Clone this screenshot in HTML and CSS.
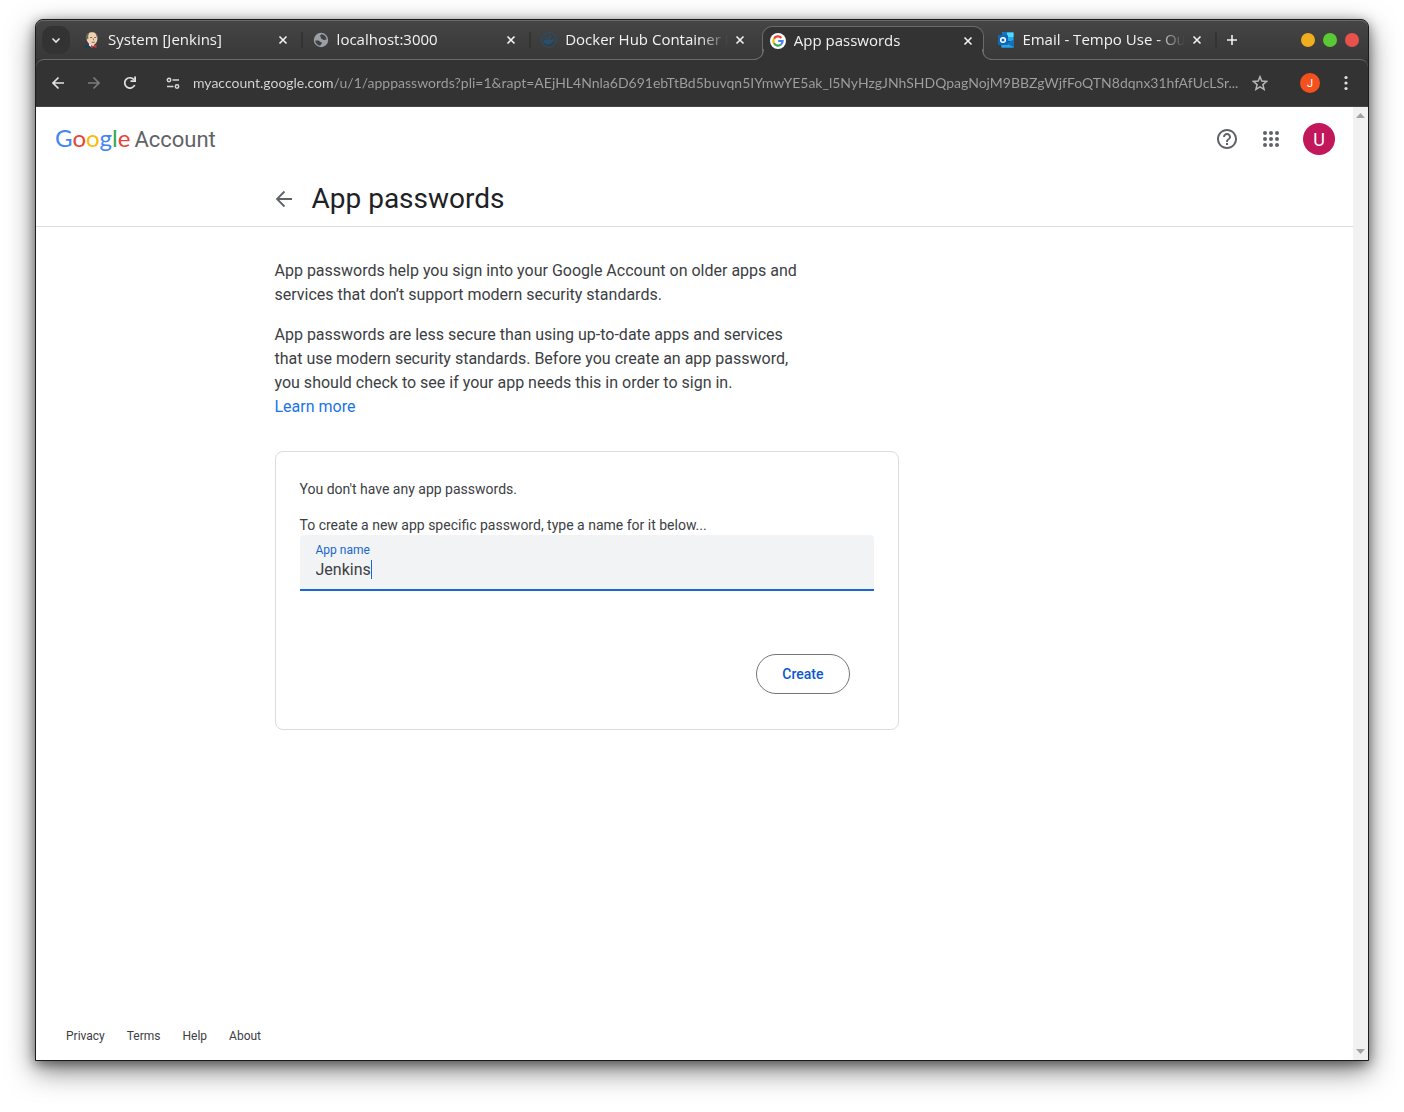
FILE: index.html
```html
<!DOCTYPE html>
<html lang="en">
<head>
<meta charset="utf-8">
<title>App passwords</title>
<link rel="stylesheet" href="styles.css">
</head>
<body>
<div class="window">
  <div class="tab-strip">
    <button class="tab-search" type="button" aria-label="Search tabs"><svg width="16" height="16" viewBox="0 0 16 16"><path d="M4.500 6.500 8 10l3.500-3.500" fill="none" stroke="#e6e6e6" stroke-width="1.600"/></svg></button>
    <div class="tabs">
      <div class="tab tab-divided">
        <svg class="favicon" viewBox="0 0 16 16"><path d="M0 16c.3-2 1.500-2.600 3.500-3.400h7c2 .4 3 1.800 3.200 3.400z" fill="#1f3d56"/><path d="M5 11.500h5v2L8 15.500l-3-2z" fill="#eef0f0"/><path d="M2.500 5.500C2.500 2 5 .2 8 .2s5.500 2 5.500 5.600c0 4-1.900 7.200-5 7.200S3.600 10.500 2.700 8z" fill="#efd0b0"/><path d="M2.700 8.500C1 5 2 1.500 5.500.5c-.8 1.200-.7 2-1.300 3.200l.2 3.300-1-.2z" fill="#6b655e"/><path d="M11.500 1.200c1.900 1.200 2.300 3.300 1.900 5.800l-.9-2.800z" fill="#6b655e"/><path d="M6 5.500h2.200M10.200 5.500h1.800M7.800 10.300h3M9.400 6.500v1.700" fill="none" stroke="#594236" stroke-width=".7"/><path d="m7 13 2.300 1 3.200-1.400v3.400l-3.200-1-2.300 1z" fill="#d33833"/></svg>
        <span class="tab-title">System [Jenkins]</span>
        <button class="tab-close" type="button" aria-label="Close System"><svg width="16" height="16" viewBox="0 0 16 16"><path d="m4.500 4.500 7 7m0-7-7 7"/></svg></button>
      </div>
      <div class="tab tab-divided">
        <svg class="favicon" viewBox="0 0 16 16"><circle cx="8" cy="8" r="7.200" fill="#9aa0a6"/><path d="M2.200 8.500h3c1.500 0 1.300 1.500 2.600 1.500 1.200 0 1.200 1 .8 1.800-.5.800-1.300 1-1.400 2C4.500 13.500 2.400 11.200 2.200 8.500zM8.500 2.200C7 3 6.800 4 7.600 4.700c.7.600-.4 1.600.8 2 1 .3 1.400 1.200 2.500 1.300 1 .1 1.500-.6 2.800-.3-.2-2.900-2.300-5.200-5.200-5.500z" fill="#3f4144"/></svg>
        <span class="tab-title">localhost:3000</span>
        <button class="tab-close" type="button" aria-label="Close localhost"><svg width="16" height="16" viewBox="0 0 16 16"><path d="m4.500 4.500 7 7m0-7-7 7"/></svg></button>
      </div>
      <div class="tab">
        <svg class="favicon" viewBox="0 0 16 16"><circle cx="8" cy="8" r="7.400" fill="none" stroke="#26506d" stroke-width="1"/><path d="M2.800 8h7.800c.6 0 .8-1.500 1.500-2 .5.500.7 1.200.6 1.600l1 .3c-.4.900-1.200 1-1.700 1-1.200 2.500-3.200 3.600-5.600 3.400-2.500-.2-3.800-1.700-3.600-4.300zM3.800 5.800h1.600v1.600H3.800zM5.900 5.800h1.600v1.600H5.900zM8 5.800h1.600v1.600H8zM8 3.700h1.600v1.600H8z" fill="#255171"/></svg>
        <span class="tab-title">Docker Hub Container I</span>
        <button class="tab-close" type="button" aria-label="Close Docker Hub"><svg width="16" height="16" viewBox="0 0 16 16"><path d="m4.500 4.500 7 7m0-7-7 7"/></svg></button>
      </div>
      <div class="tab tab-active">
        <svg class="favicon" viewBox="0 0 16 16"><circle cx="8" cy="8" r="8" fill="#fff"/><g fill="none" stroke-width="2.200"><path d="M4 5.700A4.600 4.600 0 0 1 11.400 4.900" stroke="#ea4335"/><path d="M4 5.600a4.700 4.700 0 0 0 0 4.800" stroke="#fbbc05"/><path d="M4 10.300a4.600 4.600 0 0 0 7 1.200" stroke="#34a853"/><path d="M8.200 8h4.400c0 1.500-.6 2.700-1.600 3.500" stroke="#4285f4"/></g></svg>
        <span class="tab-title">App passwords</span>
        <button class="tab-close" type="button" aria-label="Close App passwords"><svg width="16" height="16" viewBox="0 0 16 16"><path d="m4.500 4.500 7 7m0-7-7 7"/></svg></button>
      </div>
      <div class="tab tab-divided">
        <svg class="favicon" viewBox="0 0 16 16"><path d="M4 .5h11.500V9H4z" fill="#28a8ea"/><path d="M9 .5h6.500v4.500H9z" fill="#50d9ff"/><path d="M4 .5h5V5H4z" fill="#0f78d4"/><path d="M3 15.500V9l6 2 7-3.500v8z" fill="#1490df"/><path d="m4 9 12 6.500H4z" fill="#28a8ea"/><path d="m16 7.500-7 4 7 4z" fill="#1271bd"/><rect y="3" width="10" height="10" rx=".8" fill="#0f67b7"/><circle cx="5" cy="8" r="2.300" fill="none" stroke="#fff" stroke-width="1.500"/></svg>
        <span class="tab-title">Email - Tempo Use - Ou</span>
        <button class="tab-close" type="button" aria-label="Close Email"><svg width="16" height="16" viewBox="0 0 16 16"><path d="m4.500 4.500 7 7m0-7-7 7"/></svg></button>
      </div>
    </div>
    <button class="new-tab" type="button" aria-label="New tab"><svg width="16" height="16" viewBox="0 0 16 16"><path d="M8 3v10M3 8h10" stroke="#f2f2f2" stroke-width="1.600"/></svg></button>
    <div class="window-controls">
      <button class="control control-minimize" type="button" aria-label="Minimize"></button>
      <button class="control control-maximize" type="button" aria-label="Maximize"></button>
      <button class="control control-close" type="button" aria-label="Close window"></button>
    </div>
  </div>

  <div class="toolbar">
    <button class="tool" type="button" aria-label="Back"><svg width="16" height="16" viewBox="0 0 16 16"><path d="M14 8H3m5.500-5.500L3 8l5.500 5.500" fill="none" stroke="#e3e3e3" stroke-width="1.700"/></svg></button>
    <button class="tool" type="button" aria-label="Forward"><svg width="16" height="16" viewBox="0 0 16 16"><path d="M2 8h11M7.500 2.500 13 8l-5.500 5.500" fill="none" stroke="#7c7c7c" stroke-width="1.700"/></svg></button>
    <button class="tool" type="button" aria-label="Reload"><svg width="16" height="16" viewBox="0 0 16 16"><path d="M12.700 10A5.200 5.200 0 1 1 12 4.700" fill="none" stroke="#e3e3e3" stroke-width="1.700"/><path d="M14 1.500V7H8.500V5.300h3.700V1.500z" fill="#e3e3e3"/></svg></button>
    <div class="address">
      <button class="tool" type="button" aria-label="Site information"><svg width="16" height="16" viewBox="0 0 16 16"><g fill="none" stroke="#d8d8d8" stroke-width="1.500"><circle cx="4" cy="5" r="1.700"/><path d="M7.500 5H14M2 11.500h6.500"/><circle cx="12" cy="11.500" r="1.700"/></g></svg></button>
      <input class="url" type="text" aria-label="Address" value="myaccount.google.com/u/1/apppasswords?pli=1&amp;rapt=AEjHL4Nnla6D691ebTtBd5buvqn5IYmwYE5ak_l5NyHzgJNhSHDQpagNojM9BBZgWjfFoQTN8dqnx31hfAfUcLSr...">
      <button class="tool" type="button" aria-label="Bookmark"><svg width="16" height="16" viewBox="0 0 16 16"><path d="m8 1.700 1.800 4.400 4.800.4-3.700 3.100 1.200 4.700L8 11.800l-4.100 2.500 1.200-4.700-3.700-3.100 4.800-.4z" fill="none" stroke="#b8b8b8" stroke-width="1.500"/></svg></button>
    </div>
    <button class="profile" type="button">J</button>
    <button class="tool" type="button" aria-label="Menu"><svg width="16" height="16" viewBox="0 0 16 16" fill="#e3e3e3"><circle cx="8" cy="2.500" r="1.600"/><circle cx="8" cy="8" r="1.600"/><circle cx="8" cy="13.500" r="1.600"/></svg></button>
  </div>

  <div class="viewport">
    <div class="page">
      <header class="site-header">
        <a class="brand" href="#"><span class="logo"><span class="blue">G</span><span class="red">o</span><span class="yellow">o</span><span class="blue">g</span><span class="green">l</span><span class="red">e</span></span><span class="brand-name">Account</span></a>
        <nav class="site-tools">
          <button class="plain" type="button" aria-label="Help"><svg width="24" height="24" viewBox="0 0 24 24" fill="#5f6368"><path d="M11 18h2v-2h-2v2zm1-16C6.480 2 2 6.480 2 12s4.480 10 10 10 10-4.480 10-10S17.520 2 12 2zm0 18c-4.410 0-8-3.590-8-8s3.590-8 8-8 8 3.590 8 8-3.590 8-8 8zm0-14c-2.210 0-4 1.790-4 4h2c0-1.100.9-2 2-2s2 .9 2 2c0 2-3 1.750-3 5h2c0-2.250 3-2.500 3-5 0-2.210-1.790-4-4-4z"/></svg></button>
          <button class="plain" type="button" aria-label="Google apps"><svg width="24" height="24" viewBox="0 0 24 24" fill="#5f6368"><circle cx="6" cy="6" r="2"/><circle cx="12" cy="6" r="2"/><circle cx="18" cy="6" r="2"/><circle cx="6" cy="12" r="2"/><circle cx="12" cy="12" r="2"/><circle cx="18" cy="12" r="2"/><circle cx="6" cy="18" r="2"/><circle cx="12" cy="18" r="2"/><circle cx="18" cy="18" r="2"/></svg></button>
          <button class="avatar" type="button">U</button>
        </nav>
      </header>
      <div class="title-bar">
        <div class="column title-row">
          <a class="back" href="#" aria-label="Back"><svg width="20" height="20" viewBox="0 0 20 20"><path d="M17 10H2m7.500-7.500L2 10l7.500 7.500" fill="none" stroke="#5f6368" stroke-width="1.800"/></svg></a>
          <h1>App passwords</h1>
        </div>
      </div>
      <main class="column content">
        <div class="intro">
          <p>App passwords help you sign into your Google Account on older apps and services that don’t support modern security standards.</p>
          <p>App passwords are less secure than using up-to-date apps and services that use modern security standards. Before you create an app password, you should check to see if your app needs this in order to sign in. <a href="#">Learn&nbsp;more</a></p>
        </div>
        <form class="card">
          <p>You don't have any app passwords.</p>
          <p>To create a new app specific password, type a name for it below...</p>
          <div class="field">
            <label for="app-name">App name</label>
            <input id="app-name" type="text" value="Jenkins">
            <span class="caret"></span>
          </div>
          <div class="actions"><button class="create" type="button">Create</button></div>
        </form>
      </main>
      <footer class="site-footer"><a href="#">Privacy</a><a href="#">Terms</a><a href="#">Help</a><a href="#">About</a></footer>
    </div>
    <div class="scrollbar"><svg width="9" height="5" viewBox="0 0 9 5"><path d="m0 5 4.500-5L9 5z" fill="#a3a3a3"/></svg><svg width="9" height="5" viewBox="0 0 9 5"><path d="m0 0 4.500 5L9 0z" fill="#a3a3a3"/></svg></div>
  </div>
</div>
</body>
</html>
```
FILE: styles.css
```css
* { box-sizing: border-box; }

body {
  margin: 0;
  min-height: 100vh;
  display: flex;
  padding: 19px 35px 51px;
  background: #fff;
  font-family: Roboto, "Liberation Sans", sans-serif;
  color: #3c4043;
}

button {
  border: 0;
  padding: 0;
  background: none;
  font: inherit;
  display: flex;
  align-items: center;
  justify-content: center;
  flex: none;
}

a { color: inherit; text-decoration: none; }
p { margin: 0; }
svg { display: block; flex: none; }

.window {
  flex: 1;
  min-width: 0;
  display: flex;
  flex-direction: column;
  border: 1px solid #1b1b1b;
  border-radius: 8px 8px 0 0;
  background: #333;
  box-shadow: 0 10px 28px rgba(0, 0, 0, .5), 0 3px 12px rgba(0, 0, 0, .45);
}

/* Tab strip */
.tab-strip {
  display: flex;
  align-items: center;
  height: 39px;
  padding: 0 9px 0 6px;
  box-shadow: inset 0 1px #6b6b6b;
  border-radius: 7px 7px 0 0;
  background: linear-gradient(#454545, #383838);
}

.tab-search {
  width: 28px;
  height: 28px;
  border-radius: 10px;
  background: #333;
}

.tabs {
  flex: 1;
  min-width: 0;
  display: flex;
  align-self: stretch;
  margin-left: 4px;
}

.tab {
  position: relative;
  flex: 1 1 0;
  min-width: 0;
  display: flex;
  align-items: center;
  gap: 8px;
  padding: 0 12px 0 10px;
  color: #f2f2f2;
  font: 15px/18px "Open Sans", "Noto Sans", sans-serif;
}

.tab-divided::after {
  content: "";
  position: absolute;
  right: 0;
  top: 12px;
  width: 2px;
  height: 16px;
  background: #333;
}

.favicon { width: 16px; height: 16px; }

.tab-title {
  flex: 1;
  min-width: 0;
  padding-bottom: 2px;
  margin-right: -4px;
  overflow: hidden;
  white-space: nowrap;
  mask-image: linear-gradient(90deg, #000 calc(100% - 28px), transparent);
}

.tab-close path { stroke: #f2f2f2; stroke-width: 1.6; }

.tab-active {
  z-index: 1;
  align-self: flex-end;
  height: 34px;
  margin: 0 4px -1px 2px;
  padding: 0 7px 6px;
  border: 1px solid #6b6b6b;
  border-bottom: 0;
  border-radius: 10px 10px 0 0;
  background: #333;
}

.tab-active::before,
.tab-active::after {
  content: "";
  position: absolute;
  bottom: 0;
  width: 10px;
  height: 10px;
  border: 0 solid #6b6b6b;
  border-bottom-width: 1px;
}

.tab-active::before {
  left: -10px;
  border-right-width: 1px;
  border-bottom-right-radius: 10px;
  box-shadow: 3px 3px 0 #333;
  clip-path: inset(0 -1px 0 0);
}

.tab-active::after {
  right: -10px;
  border-left-width: 1px;
  border-bottom-left-radius: 10px;
  box-shadow: -3px 3px 0 #333;
  clip-path: inset(0 0 0 -1px);
}

.new-tab { width: 30px; height: 28px; }

.window-controls { display: flex; gap: 8px; margin-left: 54px; }
.control { width: 14px; height: 14px; border-radius: 50%; }
.control-minimize { background: #f0ad1e; }
.control-maximize { background: #5bc936; }
.control-close { background: #e9524a; }

/* Toolbar */
.toolbar {
  display: flex;
  align-items: center;
  gap: 20px;
  height: 48px;
  padding: 0 14px;
  border-top: 1px solid #6b6b6b;
  border-bottom: 1px solid #454545;
  border-radius: 8px 8px 0 0;
  background: #333;
}

.tool { width: 16px; height: 16px; }

.address {
  flex: 1;
  min-width: 0;
  display: flex;
  align-items: center;
  gap: 6px;
  margin: 0 12px 0 7px;
}

.url {
  flex: 1;
  min-width: 0;
  border: 0;
  padding: 0 0 0 6px;
  outline: 0;
  background: linear-gradient(90deg, #d9d9d9 147px, #a0a0a0 147px);
  background-clip: text;
  color: transparent;
  font: 14px/20px Lato, "Noto Sans", sans-serif;
}

.profile {
  width: 20px;
  height: 20px;
  margin-right: -2px;
  border-radius: 50%;
  background: #f4511e;
  color: #fff;
  font-size: 11px;
}

/* Page */
.viewport { flex: 1; display: flex; background: #fff; }
.page { flex: 1; min-width: 0; display: flex; flex-direction: column; }

.scrollbar {
  width: 15px;
  display: flex;
  flex-direction: column;
  align-items: center;
  justify-content: space-between;
  padding: 6px 0;
  background: #f1f1f1;
}

.site-header {
  display: flex;
  align-items: center;
  justify-content: space-between;
  height: 64px;
  padding: 0 18px 0 19px;
}

.brand {
  display: flex;
  align-items: baseline;
  gap: 4px;
  font-size: 22px;
  line-height: 28px;
  color: #5f6368;
}

.logo { font-family: Lato, sans-serif; font-size: 24px; }
.blue { color: #4285f4; }
.red { color: #ea4335; }
.yellow { color: #fbbc05; }
.green { color: #34a853; }

.site-tools { display: flex; align-items: center; gap: 20px; }

.avatar {
  width: 32px;
  height: 32px;
  border-radius: 50%;
  background: #c2185b;
  color: #fff;
  font-size: 18px;
}

.column { width: 100%; max-width: 840px; margin: 0 auto; }
.title-bar { border-bottom: 1px solid #dadce0; }
.title-row { display: flex; align-items: center; gap: 17px; height: 55px; }

h1 {
  margin: 0;
  font-size: 28px;
  line-height: 36px;
  font-weight: 400;
  color: #202124;
}

.content { flex: 1; padding: 32px 0 24px; }
.intro { max-width: 536px; font-size: 16px; line-height: 24px; }
.intro p + p { margin-top: 16px; }
.intro a { color: #1a73e8; }

.card {
  max-width: 624px;
  margin-top: 32px;
  padding: 27px 24px 35px;
  border: 1px solid #dadce0;
  border-radius: 8px;
  font-size: 14px;
  line-height: 20px;
}

.card p + p { margin-top: 16px; }

.field {
  position: relative;
  display: flex;
  flex-direction: column;
  height: 56px;
  padding: 7px 16px;
  border-bottom: 2px solid #1967d2;
  border-radius: 4px 4px 0 0;
  background: #f1f3f4;
}

.field label { font-size: 12px; line-height: 16px; color: #1967d2; }

.field input {
  border: 0;
  padding: 0;
  outline: 0;
  background: none;
  font: 16px/24px Roboto, sans-serif;
  color: #3c4043;
}

.caret {
  position: absolute;
  left: 71px;
  top: 25px;
  width: 1px;
  height: 19px;
  background: #1967d2;
}

.actions { display: flex; justify-content: flex-end; margin-top: 63px; padding-right: 24px; }

.create {
  height: 40px;
  padding: 0 25px;
  border: 1px solid #747775;
  border-radius: 20px;
  color: #0b57d0;
  font-weight: 500;
}

.site-footer {
  display: flex;
  gap: 22px;
  padding: 0 30px 16px;
  font-size: 12px;
  line-height: 16px;
}
```
